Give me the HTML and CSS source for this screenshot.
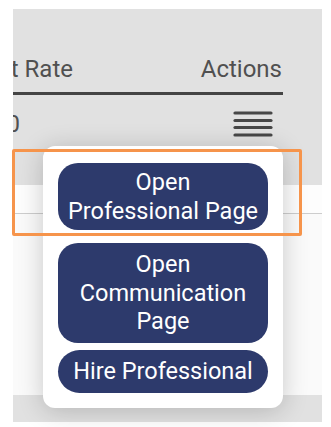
FILE: index.html
```html
<!DOCTYPE html>
<html>
<head>
<meta charset="utf-8">
<link rel="stylesheet" href="styles.css">
</head>
<body>
<div class="screen">
  <div class="table">
    <div class="thead">
      <div class="cell-rate"><span>Current Rate</span></div>
      <div class="cell-actions">Actions</div>
    </div>
    <div class="trow">
      <div class="cell-rate"><span>$100</span></div>
      <div class="cell-actions">
        <svg class="burger" width="40" height="26" viewBox="0 0 40 26">
          <g stroke="#474747" stroke-width="3.2" stroke-linecap="round">
            <line x1="2" y1="2" x2="38" y2="2"/>
            <line x1="2" y1="9.5" x2="38" y2="9.5"/>
            <line x1="2" y1="16.5" x2="38" y2="16.5"/>
            <line x1="2" y1="24" x2="38" y2="24"/>
          </g>
        </svg>
      </div>
    </div>
  </div>
  <div class="panel">
    <div class="panel-row"></div>
  </div>
</div>

<div class="menu">
  <button class="menu-btn btn-a">Open<br>Professional Page</button>
  <button class="menu-btn btn-b">Open<br>Communication<br>Page</button>
  <button class="menu-btn btn-c">Hire Professional</button>
</div>
<div class="highlight"></div>
</body>
</html>
```

FILE: styles.css
```css
html, body {
  margin: 0;
  padding: 0;
  background: #ffffff;
}
body {
  position: relative;
  width: 331px;
  height: 427px;
  overflow: hidden;
  font-family: Roboto, "Liberation Sans", sans-serif;
}
.screen {
  margin: 9px 0 0 13px;
  width: 309px;
  height: 413px;
  background: #e1e1e1;
  display: flex;
  flex-direction: column;
}
.table {
  width: 270px;
  color: #505050;
  font-size: 24px;
  line-height: 28px;
}
.thead {
  display: flex;
  box-sizing: border-box;
  align-items: flex-end;
  padding-bottom: 9px;
  border-bottom: 3px solid #444;
  height: 86px;
}
.cell-rate {
  flex: none;
  width: 70px;
  padding-right: 10px;
  box-sizing: border-box;
  display: flex;
  justify-content: flex-end;
  overflow: hidden;
  white-space: nowrap;
}
.cell-actions {
  flex: 1;
  display: flex;
  justify-content: flex-end;
  padding-right: 1px;
}
.trow {
  display: flex;
  height: 90px;
  padding-top: 15px;
  box-sizing: border-box;
}
.trow .cell-rate {
  width: 7px;
  padding-right: 0;
}
.trow .cell-actions {
  padding-right: 10px;
}
.burger {
  display: block;
  margin-top: 1px;
}
.panel {
  height: 210px;
  background: #fafafa;
}
.panel-row {
  height: 28px;
  border-bottom: 1px solid #cdcdcd;
  background: #fdfdfd;
}
.menu {
  position: absolute;
  left: 43px;
  top: 146px;
  width: 240px;
  height: 262px;
  box-sizing: border-box;
  padding: 17px 15px 15px;
  background: #ffffff;
  border-radius: 12px;
  box-shadow: 0 3px 26px rgba(0, 0, 0, 0.2);
  display: flex;
  flex-direction: column;
}
.menu-btn {
  width: 210px;
  border: none;
  background: #2d3a6c;
  color: #ffffff;
  font-family: Roboto, "Liberation Sans", sans-serif;
  font-size: 23.5px;
  line-height: 28.5px;
  text-align: center;
  border-radius: 20px;
  padding: 5px 0;
  margin: 0;
}
.btn-a {
  padding: 5px 0;
}
.btn-b {
  margin-top: 13px;
  padding: 7px 0;
}
.btn-c {
  margin-top: 7px;
  padding: 7.5px 0;
  border-radius: 22px;
}
.highlight {
  position: absolute;
  left: 12px;
  top: 149px;
  width: 290px;
  height: 87px;
  box-sizing: border-box;
  border: 3px solid #f6944b;
  border-radius: 2px;
}
```
